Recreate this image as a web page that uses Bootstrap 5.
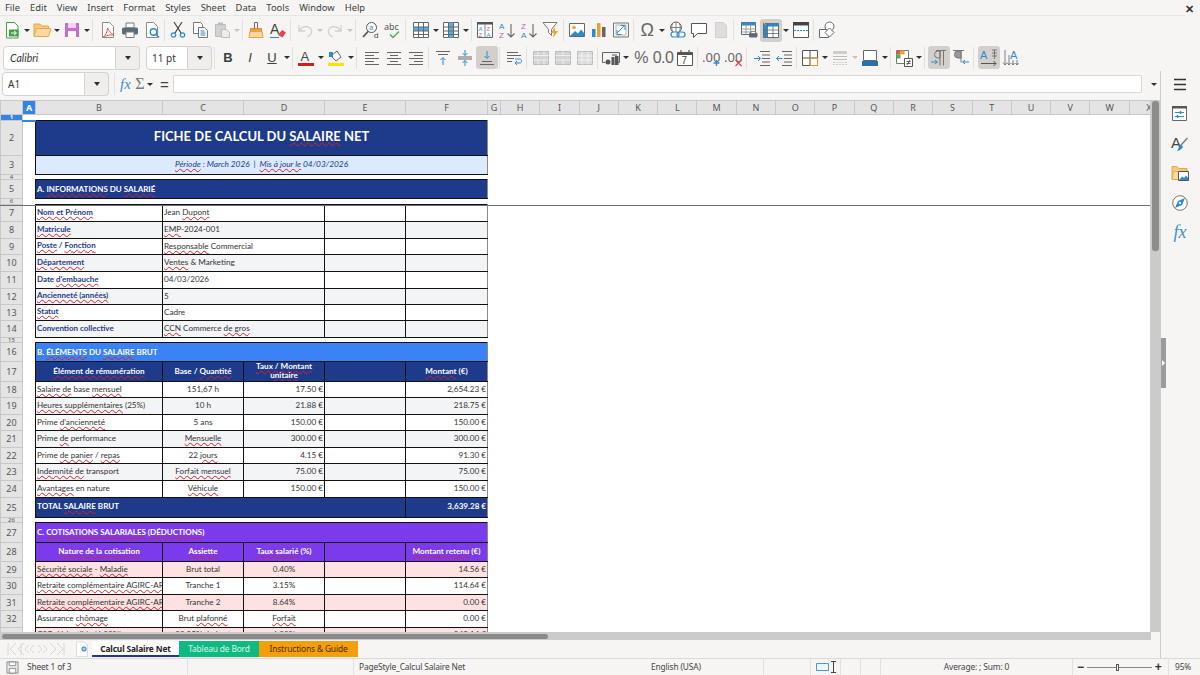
<!DOCTYPE html>
<html lang="en">
<head>
<meta charset="UTF-8" />
<title>Calcul Salaire Net</title>
<link rel="stylesheet" href="https://cdn.jsdelivr.net/npm/bootstrap@5.3.3/dist/css/bootstrap.min.css" />
<style>
  html, body { width: 1200px; height: 675px; overflow: hidden; }
  body { background: #f6f5f4; color: #3d3d3d; font: 9.4px/1 "Noto Sans", sans-serif; }
  .defs { width: 0; height: 0; position: absolute; }

  /* menu */
  .menu-row { height: 16px; border-bottom: 1px solid #e8e6e4; margin-right: 15px; flex-wrap: nowrap; padding-left: 5px; gap: 10px; }
  .menu-row .nav-link { padding: 0; color: #3d3d3d; font-size: 9.4px; line-height: 16px; }
  .close-x { position: absolute; left: 1185px; top: 3px; font-size: 11px; font-weight: 700; color: #333; }

  /* toolbars */
  .bar { height: 27px; padding-left: 1px; }
  .bar1 { height: 28px; }
  .tb { width: 22px; height: 23px; padding: 0; border: 0; border-radius: 3px; color: #3d3d3d; display: flex; align-items: center; justify-content: center; flex: none; }
  .tb.on { background: #d3d0cc; }
  .tb svg { width: 18px; height: 18px; display: block; }
  .tb-txt { font: 13px/1 "Liberation Sans", sans-serif; }
  .tb-lg { font: 16px/1 "Liberation Sans", sans-serif; color: #666; letter-spacing: -.5px; }
  .tb-omega { font-size: 18px; }
  .ar { width: 8px; height: 23px; flex: none; display: flex; align-items: center; justify-content: center; }
  .ar::after { content: ""; border: 3px solid transparent; border-top: 3.5px solid #2e2e2e; border-bottom: 0; }
  .ar.off::after { border-top-color: #c4c4c4; }
  .vsep { width: 1px; height: 22px; background: #e3e1de; flex: none; margin: 0 2px 0 1px; }
  .vsep.vw1 { margin-right: 3px; }
  .vsep.vw2 { margin-right: 4px; }
  .combo { flex: none; flex-wrap: nowrap; height: 24px; }
  .combo .form-control { font-size: 10px; line-height: 22px; height: 24px; padding: 0 5px; color: #333; background: #fff; border-color: #d5d1cd; border-radius: 4px 0 0 4px; font-family: "Noto Sans", sans-serif; min-width: 0; }
  .combo .btn { width: 24px; height: 24px; padding: 0; background: #f0eeec; border: 1px solid #d5d1cd; border-left: 0; border-radius: 0 4px 4px 0; display: flex; align-items: center; justify-content: center; margin-left: 0 !important; }
  .combo .btn::after { content: ""; border: 3.5px solid transparent; border-top: 4px solid #2e2e2e; border-bottom: 0; }
  .combo-font { width: 137px; margin: 0 6px 0 2px; }
  .combo-font .form-control { font-family: "Lato", sans-serif; font-style: italic; font-size: 10.5px; padding-left: 6px; }
  .combo-size { width: 66px; margin-right: 1px; }
  .combo-name { width: 107px; margin: 0 4px 0 2px; }
  .formula { height: 29px; padding-bottom: 3px; }
  .fx-txt { font: italic 15px/1 "Liberation Serif", serif; color: #3f8fd0; width: 17px; text-align: center; flex: none; }
  .sum-txt { font: 16px/1 "Liberation Serif", serif; color: #777; width: 12px; text-align: center; flex: none; }
  .eq-txt { font: 15px/1 "Liberation Sans", sans-serif; color: #444; width: 13px; text-align: center; margin-left: 4px; flex: none; }
  .finput { width: 969px; height: 18px; background: #fff; border: 1px solid #d9d6d3; border-radius: 2px; margin-left: 2px; flex: none; }

  /* spreadsheet */
  .work { height: 587px; }
  .left { width: 1161px; border-right: 1px solid #cfcbc7; }
  .viewport { width: 1151px; height: 532px; overflow: hidden; position: relative; background: #fff; }
  .sheet { table-layout: fixed; width: 1167px; border-collapse: collapse; font: 8.15px/1 "Lato", sans-serif; color: #333; }
  .sheet col.cr { width: 22px; } .sheet col.ca { width: 13px; } .sheet col.cb { width: 127px; }
  .sheet col.cc { width: 81px; } .sheet col.cf { width: 82px; } .sheet col.cg { width: 13px; }
  .sheet col.cn { width: 39.3px; }
  .sheet td, .sheet th { padding: 0 1px; overflow: hidden; white-space: nowrap; }
  .sheet .rh, .sheet .ch { background: #e4e4e4; color: #555; font: 400 9px/1 "Noto Sans", sans-serif; text-align: center; padding: 0 0 1px; border: 1px solid #c8c8c8; }
  .sheet .ch { height: 14px; padding: 0; }
  .sheet .sel { background: #3584e4; color: #fff; font-weight: 700; }
  .sheet .cursor { border: 0; border-left: 1px solid #3584e4; border-bottom: 2px solid #3584e4; padding: 0; }
  .sheet .r5 td, .sheet .r6 td { line-height: 3px; }
  .sheet .r5 .rh, .sheet .r6 .rh { font-size: 6px; line-height: 3px; padding: 0; }
  .r5 { height: 5px; } .r6 { height: 6px; } .r16 { height: 16px; } .r17 { height: 17px; }
  .r19 { height: 19px; } .r20 { height: 20px; } .r35 { height: 35px; }
  .sheet td.bx { border: 1px solid #111; padding-bottom: 1px; }
  .sheet td.bx:nth-last-child(2) { border-right-color: #8a8a8a; }
  .sheet .tail td.bx { vertical-align: top; padding-top: 2px; }
  .fill-navy { background: #1e3a8a; color: #fff; }
  .fill-blue { background: #3b82f6; color: #fff; }
  .fill-violet { background: #7c3aed; color: #fff; }
  .fill-sky { background: #dbeafe; color: #1e3a8a; }
  .fill-zeb { background: #f3f4f6; }
  .fill-rose { background: #fee2e2; }
  .sheet td.t-title { font-size: 13px; font-weight: 700; text-align: center; padding-bottom: 3px; }
  .sheet .t-sub { font-size: 8.3px; font-style: italic; text-align: center; }
  .sheet .t-sec { font-size: 8px; font-weight: 700; }
  .sheet .t-lab { color: #1e3a8a; font-weight: 700; font-size: 7.95px; }
  .sheet .t-head { font-size: 8.1px; font-weight: 700; text-align: center; line-height: 9px; white-space: normal; }
  .sheet td.t-tot { font-size: 8.1px; font-weight: 700; padding-bottom: 2px; }
  u.wv { text-decoration: underline wavy #d9202a; text-decoration-thickness: 1px; text-underline-offset: 1px; }
  .freeze { position: absolute; left: 0; right: 0; top: 105px; height: 1px; background: #6f6f6f; }
  .vscroll { width: 10px; background: #cbcbcb; padding: 1px 1px 0 2px; flex: none; }
  .vthumb { height: 150px; width: 7px; background: #8c8c8c; border-radius: 3px; }
  .hscroll { width: 1151px; height: 8px; background: #cbcbcb; padding: 2px 0 0 2px; }
  .hthumb { width: 546px; height: 5px; background: #8a8a8a; border-radius: 3px; }

  /* tabs */
  .tabs { height: 18px; padding-top: 1px; }
  .tab-nav { width: 75px; padding-left: 7px; }
  .tab-add { width: 17px; padding-left: 0; }
  .stab { height: 16px; line-height: 15px; font-size: 8.4px; letter-spacing: -.15px; text-align: center; flex: none; white-space: nowrap; }
  .stab-1 { width: 87px; background: #fff; color: #222; font-weight: 700; border-bottom: 2px solid #1e3a8a; }
  .stab-2 { width: 80px; background: #10b981; color: #d9f7ec; }
  .stab-3 { width: 99px; background: #f59e0b; color: #4a3000; }

  /* side */
  .side { width: 38px; padding-top: 2px; }
  .side .tb { margin: 0 auto 6.5px; }
  .side .fx-txt { font-size: 18px; color: #3f8fd0; }
  .grip { position: absolute; left: 1161px; top: 338px; width: 5px; height: 50px; background: #9b9b9b; }
  .grip::after { content: ""; position: absolute; left: 1px; top: 22px; border: 3px solid transparent; border-left: 3px solid #fff; border-right: 0; }

  /* status */
  .status { height: 17px; border-top: 1px solid #dcd9d6; font-size: 8.4px; letter-spacing: -.15px; color: #444; line-height: 16px; }
  .st { height: 16px; flex: none; border-left: 1px solid #e3e1de; white-space: nowrap; }
  .st-a { width: 187px; border-left: 0; padding-left: 6px; gap: 8px; }
  .st-b { width: 166px; }
  .st-c { width: 230px; padding-left: 5px; border-right: 0; }
  .st-d { width: 180px; padding-left: 68px; border-left: 0; }
  .st-e { width: 47px; }
  .st-f { width: 30px; padding-left: 5px; }
  .st-g { width: 20px; } .st-h { width: 20px; }
  .st-i { width: 192px; text-align: center; }
  .st-j { width: 96px; padding-left: 4px; gap: 3px; }
  .st-k { width: 32px; padding-left: 6px; }
  .zminus, .zplus { font: 700 12px/16px "Liberation Sans", sans-serif; color: #333; }
  .ztrack { width: 65px; height: 1px; background: #888; position: relative; }
  .zknob { position: absolute; left: 29px; top: -3px; width: 3px; height: 7px; border: 1px solid #555; background: #f6f5f4; }
</style>
</head>
<body class="position-relative">

<svg class="defs" xmlns="http://www.w3.org/2000/svg">
  <defs>
    <symbol id="i-new" viewBox="0 0 18 18"><path d="M3.5 1.5h8l3.5 3.5v12h-11.500z" fill="#fff" stroke="#43a047"/><path d="M6 8.500h9.500v7H6z" fill="#43a047"/><path d="M8 12h5M11 10l2.500 2L11 14" stroke="#fff" fill="none"/></symbol>
    <symbol id="i-open" viewBox="0 0 18 18"><path d="M1 15V3h6l2 2h6.500v3" fill="#f7c77f" stroke="#eaa845"/><path d="M1 15.500l2.500-8H18l-2.500 8z" fill="#fbd9a4" stroke="#eaa845"/></symbol>
    <symbol id="i-save" viewBox="0 0 18 18"><path d="M2 2h14v14H2z" fill="#c76bcc"/><path d="M5 2h8v5H5z" fill="#f1d3f2"/><path d="M5 10h8v6H5z" fill="#fff"/></symbol>
    <symbol id="i-pdf" viewBox="0 0 18 18"><path d="M3.500 1.500h7l4 4v11h-11z" fill="#fff" stroke="#8b8b8b"/><path d="M8.500 7c0 4-2 7-4.500 9.500 3-2 7-3 11-2.500-3-1.500-5-4-6.500-7z" fill="none" stroke="#e2574c"/></symbol>
    <symbol id="i-print" viewBox="0 0 18 18"><path d="M5 2h8v5H5z" fill="#fff" stroke="#7a7a7a"/><rect x="1" y="6.500" width="16" height="7" rx="1.500" fill="#5b6b7a"/><path d="M5 11h8v5.500H5z" fill="#fff" stroke="#7a7a7a"/></symbol>
    <symbol id="i-prev" viewBox="0 0 18 18"><path d="M3.500 1.500h7l4 4v11h-11z" fill="#fff" stroke="#8b8b8b"/><circle cx="10.500" cy="11" r="3.200" fill="#fff" stroke="#2c8ccb" stroke-width="1.400"/><path d="M13 13.500l3 3" stroke="#2c8ccb" stroke-width="1.500"/></symbol>
    <symbol id="i-cut" viewBox="0 0 18 18"><circle cx="4.500" cy="14" r="2.200" fill="none" stroke="#2c8ccb" stroke-width="1.200"/><circle cx="13.500" cy="14" r="2.200" fill="none" stroke="#2c8ccb" stroke-width="1.200"/><path d="M6 12L13 1M12 12L5 1" stroke="#444" stroke-width="1.200" fill="none"/></symbol>
    <symbol id="i-copy" viewBox="0 0 18 18"><path d="M2.500 1.500h7l2 2v9h-9z" fill="#fff" stroke="#777"/><path d="M7.500 6.500h6l3 3v7h-9z" fill="#fff" stroke="#777"/><path d="M9.500 10h4M9.500 12h5M9.500 14h5" stroke="#2c8ccb"/></symbol>
    <symbol id="i-paste" viewBox="0 0 18 18"><path d="M2.500 3.500h10v12h-10z" fill="#d2d2d2" stroke="#bdbdbd"/><path d="M5 1.500h5v3H5z" fill="#bdbdbd"/><path d="M8.500 8.500h5l3 3v5h-8z" fill="#ececec" stroke="#bdbdbd"/></symbol>
    <symbol id="i-clone" viewBox="0 0 18 18"><path d="M7.500 1.500h3v6h-3z" fill="#fff" stroke="#666"/><path d="M3.500 7.500h11v3h-11z" fill="#e9a13b" stroke="#d98e28"/><path d="M3 10.500h12l1 6H2z" fill="#fcd6a5" stroke="#e9a13b"/></symbol>
    <symbol id="i-clear" viewBox="0 0 18 18"><text x="1" y="13" font-family="Liberation Sans" font-size="14" fill="#444">A</text><path d="M9 14l4-5 4 2.500-3.500 5z" fill="#e2474b"/><path d="M1 16.500h9" stroke="#2c8ccb"/></symbol>
    <symbol id="i-undo" viewBox="0 0 18 18"><path d="M3 4v6h6M3.500 10C6 5 12 4 15 8c2 3 0 6.500-4 8" fill="none" stroke="#cfcfcf" stroke-width="1.300"/></symbol>
    <symbol id="i-redo" viewBox="0 0 18 18"><path d="M15 4v6H9M14.500 10C12 5 6 4 3 8c-2 3 0 6.500 4 8" fill="none" stroke="#cfcfcf" stroke-width="1.300"/></symbol>
    <symbol id="i-find" viewBox="0 0 18 18"><circle cx="9.500" cy="6.500" r="5" fill="#fff" stroke="#555"/><path d="M6 10.500L1 16" stroke="#555" stroke-width="1.800"/><text x="7.300" y="9" font-family="Liberation Sans" font-size="7" fill="#2c8ccb">a</text><text x="12" y="17" font-family="Liberation Sans" font-size="8" fill="#444">d</text></symbol>
    <symbol id="i-spell" viewBox="0 0 18 18"><text x="0" y="9" font-family="Noto Sans" font-size="9" fill="#555">abc</text><path d="M6 13.500l3 3 6-6" fill="none" stroke="#4caf50" stroke-width="1.500"/></symbol>
    <symbol id="i-rows" viewBox="0 0 18 18"><path d="M1.500 1.500h15v15h-15z" fill="#fff" stroke="#666"/><path d="M1.500 6h15v4h-15z" fill="#59ade6"/><path d="M1.500 6h15M1.500 10h15M1.500 13.500h15M6.500 1.500v15M11.500 1.500v15" stroke="#666" fill="none"/></symbol>
    <symbol id="i-cols" viewBox="0 0 18 18"><path d="M1.500 1.500h15v15h-15z" fill="#fff" stroke="#666"/><path d="M6.500 1.500h5v15h-5z" fill="#59ade6"/><path d="M1.500 6h15M1.500 10h15M1.500 13.500h15M6.500 1.500v15M11.500 1.500v15" stroke="#666" fill="none"/></symbol>
    <symbol id="i-sort" viewBox="0 0 18 18"><path d="M1.500 1.500h15v15h-15z" fill="#fff" stroke="#666"/><path d="M1 1h16v2.500H1z" fill="#555"/><path d="M9 3v13" stroke="#888"/><text x="2.500" y="9.500" font-family="Liberation Sans" font-size="6" fill="#2c8ccb">A</text><text x="10.500" y="9.500" font-family="Liberation Sans" font-size="6" fill="#c45fc9">Z</text><text x="2.500" y="15.500" font-family="Liberation Sans" font-size="6" fill="#c45fc9">Z</text><text x="10.500" y="15.500" font-family="Liberation Sans" font-size="6" fill="#2c8ccb">A</text></symbol>
    <symbol id="i-asc" viewBox="0 0 18 18"><text x="1" y="8" font-family="Liberation Sans" font-size="8" fill="#2c8ccb">A</text><text x="1" y="16.500" font-family="Liberation Sans" font-size="8" fill="#c45fc9">Z</text><path d="M13 3v13M9.500 12.500L13 16l3.500-3.500" fill="none" stroke="#666" stroke-width="1.100"/></symbol>
    <symbol id="i-desc" viewBox="0 0 18 18"><text x="1" y="8" font-family="Liberation Sans" font-size="8" fill="#c45fc9">Z</text><text x="1" y="16.500" font-family="Liberation Sans" font-size="8" fill="#2c8ccb">A</text><path d="M13 3v13M9.500 12.500L13 16l3.500-3.500" fill="none" stroke="#666" stroke-width="1.100"/></symbol>
    <symbol id="i-filter" viewBox="0 0 18 18"><path d="M1 1.500h14L9.500 8.500v6l-3-3v-3z" fill="#fff" stroke="#777"/><path d="M13 6l-4 6h3l-1 5 5-7h-3z" fill="#f0a02e"/></symbol>
    <symbol id="i-image" viewBox="0 0 18 18"><path d="M1.500 2.500h15v13h-15z" fill="#fff" stroke="#666"/><circle cx="6" cy="6.500" r="1.800" fill="#f0a02e"/><path d="M2 15l5-5 3 2.500 3-4 3.500 4v2.500z" fill="#2c8ccb"/></symbol>
    <symbol id="i-chart" viewBox="0 0 18 18"><path d="M2 8h3.500v8H2z" fill="#2c8ccb"/><path d="M7 2h3.500v14H7z" fill="#f0a02e"/><path d="M12 6h3.500v10H12z" fill="#666"/></symbol>
    <symbol id="i-pivot" viewBox="0 0 18 18"><path d="M1.500 2h15v14h-15z" fill="#f5f5f5" stroke="#777"/><path d="M4 4h10v10H4z" fill="#fff" stroke="#bbb"/><path d="M5 12l7-7M8.500 4.500H13V9M5 9v4.500h4.500" fill="none" stroke="#2c8ccb"/></symbol>
    <symbol id="i-link" viewBox="0 0 18 18"><circle cx="8" cy="6.500" r="5.500" fill="#fff" stroke="#666"/><path d="M2.500 6.500h11M8 1v11M4.800 2.500c-1.500 2.500-1.500 5.500 0 8M11.200 2.500c1.500 2.500 1.500 5.500 0 8" stroke="#666" fill="none" stroke-width=".8"/><rect x="3" y="11" width="8" height="5" rx="2.500" fill="#fff" stroke="#2c8ccb" stroke-width="1.200"/><rect x="9" y="11" width="8" height="5" rx="2.500" fill="none" stroke="#2c8ccb" stroke-width="1.200"/></symbol>
    <symbol id="i-note" viewBox="0 0 18 18"><path d="M1.500 2.500h15v10h-9l-4 4v-4h-2z" fill="#fff" stroke="#555"/></symbol>
    <symbol id="i-hdr" viewBox="0 0 18 18"><path d="M3.500 1.500h8l3 3v12h-11z" fill="#ddd" stroke="#cfcfcf"/></symbol>
    <symbol id="i-area" viewBox="0 0 18 18"><path d="M1.500 1.500h14v12h-14z" fill="#fff" stroke="#666"/><path d="M1.500 1.500h14v3h-14z" fill="#2c8ccb"/><path d="M1.500 8h14M1.500 11h14M6 1.500v12M10.500 1.500v12" stroke="#888" stroke-width=".8"/><rect x="9" y="11.500" width="8.500" height="5" rx="1.500" fill="#5b6b7a"/><path d="M11 10.500h4.500v2H11z" fill="#fff" stroke="#666" stroke-width=".7"/></symbol>
    <symbol id="i-frz" viewBox="0 0 18 18"><path d="M1.500 2.500h15v14h-15z" fill="#fff" stroke="#666"/><path d="M1.500 2.500h15v3h-15zM1.500 5.500h4v11h-4z" fill="#2c8ccb"/><path d="M1.500 9h15M1.500 12.500h15M5.500 2.500v14M11 2.500v14" stroke="#666" stroke-width=".8"/><path d="M1 1l3 3" stroke="#f0a02e"/></symbol>
    <symbol id="i-split" viewBox="0 0 18 18"><path d="M1.500 1.500h15v15h-15z" fill="#fff" stroke="#555"/><path d="M1 1h16v3.500H1z" fill="#444"/><path d="M2 9.500h14" stroke="#2c8ccb" stroke-dasharray="2 1"/></symbol>
    <symbol id="i-shapes" viewBox="0 0 18 18"><path d="M1.500 8.500h9v8h-9z" fill="#fff" stroke="#666"/><circle cx="11.500" cy="5.500" r="4.500" fill="#fff" stroke="#666"/><path d="M11.500 7l4.500 4.500-4.500 4.500L7 11.500z" fill="#fff" stroke="#666"/></symbol>
    <symbol id="i-left" viewBox="0 0 18 18"><path d="M2 3.500h14M2 6.500h9M2 9.500h14M2 12.500h9M2 15.500h14" stroke="#666"/></symbol>
    <symbol id="i-center" viewBox="0 0 18 18"><path d="M2 3.500h14M5 6.500h8M2 9.500h14M5 12.500h8M2 15.500h14" stroke="#666"/></symbol>
    <symbol id="i-right" viewBox="0 0 18 18"><path d="M2 3.500h14M7 6.500h9M2 9.500h14M7 12.500h9M2 15.500h14" stroke="#666"/></symbol>
    <symbol id="i-vtop" viewBox="0 0 18 18"><path d="M2 2.500h14M4 5.500h10" stroke="#666"/><path d="M9 16V9M6.500 11L9 8.500l2.500 2.500" fill="none" stroke="#2c8ccb"/></symbol>
    <symbol id="i-vmid" viewBox="0 0 18 18"><path d="M2 8h14M2 10h14" stroke="#666"/><path d="M9 1v5.500M6.500 4L9 6.500 11.500 4M9 17v-5.500M6.500 14L9 11.500l2.500 2.500" fill="none" stroke="#2c8ccb"/></symbol>
    <symbol id="i-vbot" viewBox="0 0 18 18"><path d="M9 2v7M6.500 7L9 9.500 11.500 7" fill="none" stroke="#2c8ccb"/><path d="M4 12.500h10M2 15.500h14" stroke="#666"/></symbol>
    <symbol id="i-wrap" viewBox="0 0 18 18"><path d="M2 3.500h11M2 6.500h14M2 9.500h7M2 12.500h5" stroke="#666"/><path d="M10 10h5c2 0 2 4 0 4h-5M12 12l-2 2 2 2" fill="none" stroke="#2c8ccb"/></symbol>
    <symbol id="i-mrg" viewBox="0 0 18 18"><path d="M1.500 2.500h15v13h-15z" fill="#d4d4d4" stroke="#bcbcbc"/><path d="M1.500 6.500h15M1.500 11h15M6 2.500v4M12 2.500v4M6 11v4.500M12 11v4.500" stroke="#eee"/></symbol>
    <symbol id="i-mrg2" viewBox="0 0 18 18"><path d="M1.500 2.500h15v13h-15z" fill="#d4d4d4" stroke="#bcbcbc"/><path d="M1.500 6.500h15M1.500 11h15M9 2.500v4M9 11v4.500" stroke="#eee"/></symbol>
    <symbol id="i-mrg3" viewBox="0 0 18 18"><path d="M1.500 2.500h15v13h-15z" fill="#dcdcdc" stroke="#bcbcbc"/><path d="M1.500 7h15M1.500 11h15M6 2.500v13M12 2.500v13" stroke="#f2f2f2"/></symbol>
    <symbol id="i-cur" viewBox="0 0 18 18"><path d="M.5 3.500h17v10h-3" fill="none" stroke="#666"/><path d="M.5 3.500v10h3" fill="none" stroke="#666"/><circle cx="6" cy="13" r="2.500" fill="#555"/><path d="M9.500 8h3v8h-3zM13 7h3.500v9H13z" fill="#555"/><path d="M10 6h5" stroke="#555"/></symbol>
    <symbol id="i-date" viewBox="0 0 18 18"><path d="M1.500 3.500h15v13h-15z" fill="#fff" stroke="#555"/><path d="M1.500 3.500h15v2.500h-15z" fill="#555"/><path d="M5 1v3M13 1v3" stroke="#555" stroke-width="1.200"/><text x="5.500" y="15" font-family="Liberation Sans" font-size="10" fill="#444">7</text></symbol>
    <symbol id="i-addd" viewBox="0 0 18 18"><text x="-1" y="13" font-family="Noto Sans" font-size="13" fill="#666">.00</text><path d="M13.500 11v6M10.500 14h6" stroke="#2c8ccb" stroke-width="1.300"/></symbol>
    <symbol id="i-deld" viewBox="0 0 18 18"><text x="-1" y="13" font-family="Noto Sans" font-size="13" fill="#666">.00</text><path d="M10.500 11l6 6M16.500 11l-6 6" stroke="#e2474b" stroke-width="1.300"/></symbol>
    <symbol id="i-ind" viewBox="0 0 18 18"><path d="M7 2.500h10M9 6h8M9 9.500h8M9 13h8M7 16.500h10" stroke="#666"/><path d="M1 9.500h6M5 7l2.500 2.500L5 12" fill="none" stroke="#2c8ccb"/></symbol>
    <symbol id="i-out" viewBox="0 0 18 18"><path d="M7 2.500h10M9 6h8M9 9.500h8M9 13h8M7 16.500h10" stroke="#666"/><path d="M7.500 9.500h-6M4 7L1.500 9.500 4 12" fill="none" stroke="#2c8ccb"/></symbol>
    <symbol id="i-bord" viewBox="0 0 18 18"><path d="M1.500 1.500h15v15h-15z" fill="#fff" stroke="#555"/><path d="M9 1.500v15M1.500 9h15" stroke="#555"/><path d="M9 9v7.500h7.500V9z" fill="none" stroke="#e9942c"/></symbol>
    <symbol id="i-bstyle" viewBox="0 0 18 18"><path d="M2 2h14v3H2z" fill="#ccc"/><path d="M2 7.500h14M2 10.500h14" stroke="#bbb"/><path d="M2 13.500h14M2 15.500h14" stroke="#ccc" stroke-dasharray="2 1"/></symbol>
    <symbol id="i-bcol" viewBox="0 0 18 18"><path d="M2.500 1.500h13v10h-13z" fill="#fff" stroke="#666"/><path d="M1 12h16v5H1z" fill="#2771b3"/></symbol>
    <symbol id="i-cond" viewBox="0 0 18 18"><path d="M1.500 1.500h12v13h-12z" fill="#fff" stroke="#777"/><path d="M1.500 1.500h4v4h-4z" fill="#e2574c"/><path d="M5.500 1.500h4v4h-4z" fill="#f0a02e"/><path d="M1.500 5.500h4v4h-4z" fill="#4caf50"/><path d="M9.500 9.500h8v8h-8z" fill="#fff" stroke="#555"/><path d="M11.500 12.500h4M11.500 14.500h4M15 11l-3 5" stroke="#333" stroke-width=".8"/></symbol>
    <symbol id="i-ltr" viewBox="0 0 18 18"><path d="M10 1.500v15M13.500 1.500v15M6 1.500h10" stroke="#777" fill="none"/><path d="M10 2H8a3.500 3.500 0 0 0 0 7h2z" fill="none" stroke="#777"/><path d="M1 13h6M5 11l2.500 2L5 15" stroke="#2c8ccb" fill="none"/></symbol>
    <symbol id="i-rtl" viewBox="0 0 18 18"><path d="M9 1.500v12M1 1.500h11" stroke="#777" fill="none"/><path d="M9 2H6a3.500 3.500 0 0 0 0 7h3z" fill="#999" stroke="#777"/><path d="M17 13h-6M13 11l-2.500 2 2.500 2" stroke="#2c8ccb" fill="none"/></symbol>
    <symbol id="i-thz" viewBox="0 0 18 18"><text x="0" y="10" font-family="Liberation Sans" font-size="11" fill="#2c8ccb">A</text><path d="M12 1h5M12 4h5M12 7h5M14.500 1v9" stroke="#666" stroke-width=".8"/><path d="M1 14.500h15M13.500 12l2.500 2.500-2.500 2.500" fill="none" stroke="#555"/></symbol>
    <symbol id="i-tvt" viewBox="0 0 18 18"><text x="8" y="10" font-family="Liberation Sans" font-size="11" fill="#2c8ccb">A</text><path d="M3 1v15M1 13.500L3 16l2-2.500M7 6v10M5.500 14L7 16l1.500-2M11 11v5M9.500 14l1.500 2 1.500-2M15 11v5M13.500 14l1.500 2 1.500-2" fill="none" stroke="#666" stroke-width=".8"/></symbol>
    <symbol id="i-burger" viewBox="0 0 18 18"><path d="M3 3.500h12M3 8.500h12M3 13.500h12" stroke="#333" stroke-width="1.700"/></symbol>
    <symbol id="i-prop" viewBox="0 0 18 18"><path d="M1.500 1.500h14v14h-14z" fill="#fff" stroke="#666"/><path d="M1 1h15v2.500H1z" fill="#555"/><path d="M4 7.500h9M4 11.500h9" stroke="#2c8ccb"/><path d="M9.500 6v3M6.500 10v3" stroke="#2c8ccb" stroke-width="1.500"/></symbol>
    <symbol id="i-style" viewBox="0 0 18 18"><text x="0" y="13" font-family="Liberation Sans" font-size="15" fill="#444">A</text><path d="M16.500 3L10 10" stroke="#777" stroke-width="1.300"/><path d="M10 9.500l2 2c-1 2.500-3 4-6 4.500 1.500-1.500 1.500-5 4-6.500z" fill="#2c8ccb"/></symbol>
    <symbol id="i-gall" viewBox="0 0 18 18"><path d="M1 15V2.500h5l2 2h8v3" fill="#f7c77f" stroke="#eaa845"/><path d="M1 15.500l1.500-8H8v8z" fill="#fbd9a4" stroke="#eaa845"/><path d="M7.500 7.500h10v9h-10z" fill="#fff" stroke="#555"/><path d="M8 16l3-3.500 2 1.500 2-2.500 2 2.500V16z" fill="#2c8ccb"/></symbol>
    <symbol id="i-navi" viewBox="0 0 18 18"><circle cx="9" cy="9" r="7.300" fill="#fff" stroke="#777"/><path d="M14 4l-3 7-7 3 3-7z" fill="#2c8ccb"/><circle cx="9" cy="9" r="1.200" fill="#fff"/></symbol>
    <symbol id="i-nav" viewBox="0 0 58 16"><g fill="none" stroke="#d6d6d6"><path d="M1 2v12M9 2L3 8l6 6M17 2l-6 6 6 6M14 2v12"/><path d="M22 4l-4 4 4 4M27 4l-4 4 4 4M31 4l4 4-4 4M36 4l4 4-4 4"/><path d="M43 2l6 6-6 6M50 2l6 6-6 6M57 2v12"/></g></symbol>
    <symbol id="i-add" viewBox="0 0 14 16"><path d="M1.500 1h8l3 3v11.500h-11z" fill="#fff" stroke="#ddd"/><circle cx="9" cy="8" r="2.500" fill="#2c8ccb"/><path d="M7.500 8h3M9 6.500v3" stroke="#fff" stroke-width=".8"/></symbol>
    <symbol id="i-doc" viewBox="0 0 14 14"><path d="M1 1h12v12H1z" fill="#eee" stroke="#888"/><path d="M3.500 1h7v4h-7zM3.500 8h7v5h-7z" fill="#fff" stroke="#888"/></symbol>
    <symbol id="i-mode" viewBox="0 0 24 12"><path d="M.5 2.500h12v7H.5z" fill="#eef5fb" stroke="#4f97d3"/><path d="M15 .5h5M15 11.500h5M17.500 .5v11" stroke="#444"/></symbol>
  </defs>
</svg>

<div class="d-flex flex-column vh-100">
  <nav class="nav menu-row">
    <a class="nav-link" href="#">File</a><a class="nav-link" href="#">Edit</a><a class="nav-link" href="#">View</a><a class="nav-link" href="#">Insert</a><a class="nav-link" href="#">Format</a><a class="nav-link" href="#">Styles</a><a class="nav-link" href="#">Sheet</a><a class="nav-link" href="#">Data</a><a class="nav-link" href="#">Tools</a><a class="nav-link" href="#">Window</a><a class="nav-link" href="#">Help</a>
  </nav>
  <span class="close-x">&#10005;</span>

  <!-- standard toolbar -->
  <div class="bar bar1 d-flex align-items-center">
    <button class="btn tb"><svg><use href="#i-new"/></svg></button><span class="ar"></span>
    <button class="btn tb"><svg><use href="#i-open"/></svg></button><span class="ar"></span>
    <button class="btn tb"><svg><use href="#i-save"/></svg></button><span class="ar"></span><span class="vsep vw2"></span>
    <button class="btn tb"><svg><use href="#i-pdf"/></svg></button>
    <button class="btn tb"><svg><use href="#i-print"/></svg></button>
    <button class="btn tb"><svg><use href="#i-prev"/></svg></button><span class="vsep"></span>
    <button class="btn tb"><svg><use href="#i-cut"/></svg></button>
    <button class="btn tb"><svg><use href="#i-copy"/></svg></button>
    <button class="btn tb"><svg><use href="#i-paste"/></svg></button><span class="ar off"></span><span class="vsep"></span>
    <button class="btn tb"><svg><use href="#i-clone"/></svg></button>
    <button class="btn tb"><svg><use href="#i-clear"/></svg></button><span class="vsep vw1"></span>
    <button class="btn tb"><svg><use href="#i-undo"/></svg></button><span class="ar off"></span>
    <button class="btn tb"><svg><use href="#i-redo"/></svg></button><span class="ar off"></span><span class="vsep vw2"></span>
    <button class="btn tb"><svg><use href="#i-find"/></svg></button>
    <button class="btn tb"><svg><use href="#i-spell"/></svg></button><span class="vsep vw2"></span>
    <button class="btn tb"><svg><use href="#i-rows"/></svg></button><span class="ar"></span>
    <button class="btn tb"><svg><use href="#i-cols"/></svg></button><span class="ar"></span><span class="vsep"></span>
    <button class="btn tb"><svg><use href="#i-sort"/></svg></button>
    <button class="btn tb"><svg><use href="#i-asc"/></svg></button>
    <button class="btn tb"><svg><use href="#i-desc"/></svg></button>
    <button class="btn tb"><svg><use href="#i-filter"/></svg></button><span class="vsep"></span>
    <button class="btn tb"><svg><use href="#i-image"/></svg></button>
    <button class="btn tb"><svg><use href="#i-chart"/></svg></button>
    <button class="btn tb"><svg><use href="#i-pivot"/></svg></button><span class="vsep"></span>
    <button class="btn tb tb-lg tb-omega">&#937;</button><span class="ar"></span>
    <button class="btn tb"><svg><use href="#i-link"/></svg></button>
    <button class="btn tb"><svg><use href="#i-note"/></svg></button>
    <button class="btn tb"><svg><use href="#i-hdr"/></svg></button><span class="vsep vw2"></span>
    <button class="btn tb"><svg><use href="#i-area"/></svg></button>
    <button class="btn tb on"><svg><use href="#i-frz"/></svg></button><span class="ar"></span>
    <button class="btn tb"><svg><use href="#i-split"/></svg></button><span class="vsep"></span>
    <button class="btn tb"><svg><use href="#i-shapes"/></svg></button>
  </div>

  <!-- formatting toolbar -->
  <div class="bar d-flex align-items-center">
    <div class="input-group combo combo-font"><div class="form-control">Calibri</div><button class="btn"></button></div>
    <div class="input-group combo combo-size"><div class="form-control">11 pt</div><button class="btn"></button></div>
    <span class="vsep"></span>
    <button class="btn tb tb-txt fw-bold">B</button>
    <button class="btn tb tb-txt fst-italic">I</button>
    <button class="btn tb tb-txt text-decoration-underline">U</button><span class="ar"></span><span class="vsep"></span>
    <button class="btn tb"><svg viewBox="0 0 18 18"><text x="3.500" y="12" font-family="Liberation Sans" font-size="13" fill="#444">A</text><path d="M1 14h16v3H1z" fill="#c9211e"/></svg></button><span class="ar"></span>
    <button class="btn tb"><svg viewBox="0 0 18 18"><path d="M4 7l6-5 4 6-5 4z" fill="#fff" stroke="#666"/><path d="M2 3h4v5H2z" fill="#2c8ccb"/><path d="M1 14h16v3H1z" fill="#ffe100"/></svg></button><span class="ar"></span><span class="vsep vw2"></span>
    <button class="btn tb"><svg><use href="#i-left"/></svg></button>
    <button class="btn tb"><svg><use href="#i-center"/></svg></button>
    <button class="btn tb"><svg><use href="#i-right"/></svg></button><span class="vsep vw1"></span>
    <button class="btn tb"><svg><use href="#i-vtop"/></svg></button>
    <button class="btn tb"><svg><use href="#i-vmid"/></svg></button>
    <button class="btn tb on"><svg><use href="#i-vbot"/></svg></button><span class="vsep vw1"></span>
    <button class="btn tb"><svg><use href="#i-wrap"/></svg></button><span class="vsep vw1"></span>
    <button class="btn tb"><svg><use href="#i-mrg"/></svg></button>
    <button class="btn tb"><svg><use href="#i-mrg2"/></svg></button>
    <button class="btn tb"><svg><use href="#i-mrg3"/></svg></button><span class="vsep"></span>
    <button class="btn tb"><svg><use href="#i-cur"/></svg></button><span class="ar"></span>
    <button class="btn tb tb-lg">%</button>
    <button class="btn tb tb-lg">0.0</button>
    <button class="btn tb"><svg><use href="#i-date"/></svg></button><span class="vsep vw1"></span>
    <button class="btn tb"><svg><use href="#i-addd"/></svg></button>
    <button class="btn tb"><svg><use href="#i-deld"/></svg></button><span class="vsep vw2"></span>
    <button class="btn tb"><svg><use href="#i-ind"/></svg></button>
    <button class="btn tb"><svg><use href="#i-out"/></svg></button><span class="vsep"></span>
    <button class="btn tb"><svg><use href="#i-bord"/></svg></button><span class="ar"></span>
    <button class="btn tb"><svg><use href="#i-bstyle"/></svg></button><span class="ar off"></span>
    <button class="btn tb"><svg><use href="#i-bcol"/></svg></button><span class="ar"></span><span class="vsep"></span>
    <button class="btn tb"><svg><use href="#i-cond"/></svg></button><span class="ar"></span><span class="vsep vw1"></span>
    <button class="btn tb on"><svg><use href="#i-ltr"/></svg></button>
    <button class="btn tb"><svg><use href="#i-rtl"/></svg></button><span class="vsep vw2"></span>
    <button class="btn tb on"><svg><use href="#i-thz"/></svg></button>
    <button class="btn tb"><svg><use href="#i-tvt"/></svg></button>
  </div>

  <div class="work d-flex">
    <div class="left d-flex flex-column">
      <!-- formula bar -->
      <div class="formula d-flex align-items-center">
        <div class="input-group combo combo-name"><div class="form-control">A1</div><button class="btn"></button></div>
        <span class="vsep"></span>
        <span class="fx-txt">fx</span><span class="sum-txt">&#931;</span><span class="ar"></span><span class="eq-txt">=</span>
        <div class="finput"></div><span class="ar ms-2"></span>
      </div>

      <div class="d-flex">
        <div class="viewport">
          <table class="sheet">
            <colgroup><col class="cr"><col class="ca"><col class="cb"><col class="cc"><col class="cc"><col class="cc"><col class="cf"><col class="cg"><col class="cn"><col class="cn"><col class="cn"><col class="cn"><col class="cn"><col class="cn"><col class="cn"><col class="cn"><col class="cn"><col class="cn"><col class="cn"><col class="cn"><col class="cn"><col class="cn"><col class="cn"><col class="cn"><col class="cn"></colgroup>
            <tr><th class="ch"></th><th class="ch sel">A</th><th class="ch">B</th><th class="ch">C</th><th class="ch">D</th><th class="ch">E</th><th class="ch">F</th><th class="ch">G</th><th class="ch">H</th><th class="ch">I</th><th class="ch">J</th><th class="ch">K</th><th class="ch">L</th><th class="ch">M</th><th class="ch">N</th><th class="ch">O</th><th class="ch">P</th><th class="ch">Q</th><th class="ch">R</th><th class="ch">S</th><th class="ch">T</th><th class="ch">U</th><th class="ch">V</th><th class="ch">W</th><th class="ch">X</th></tr>
            <tr class="r6"><th class="rh sel">1</th><td class="cursor"></td><td colspan="23"></td></tr>
            <tr class="r35"><th class="rh">2</th><td></td><td colspan="5" class="bx fill-navy t-title">FICHE DE CALCUL DU <u class="wv">SALAIRE</u> NET</td><td colspan="18"></td></tr>
            <tr class="r19"><th class="rh">3</th><td></td><td colspan="5" class="bx fill-sky t-sub"><u class="wv">Période</u> : March 2026 &nbsp;|&nbsp; <u class="wv">Mis à jour le</u> 04/03/2026</td><td colspan="18"></td></tr>
            <tr class="r5"><th class="rh">4</th><td></td><td colspan="23"></td></tr>
            <tr class="r19"><th class="rh">5</th><td></td><td colspan="5" class="bx fill-navy t-sec">A. <u class="wv">INFORMATIONS</u> DU <u class="wv">SALARIÉ</u></td><td colspan="18"></td></tr>
            <tr class="r6"><th class="rh">6</th><td></td><td colspan="23"></td></tr>
            <tr class="r17"><th class="rh">7</th><td></td><td class="bx t-lab"><u class="wv">Nom et Prénom</u></td><td class="bx" colspan="2">Jean <u class="wv">Dupont</u></td><td class="bx"></td><td class="bx"></td><td colspan="18"></td></tr>
            <tr class="r17"><th class="rh">8</th><td></td><td class="bx t-lab fill-zeb"><u class="wv">Matricule</u></td><td class="bx fill-zeb" colspan="2"><u class="wv">EMP</u>-2024-001</td><td class="bx fill-zeb"></td><td class="bx fill-zeb"></td><td colspan="18"></td></tr>
            <tr class="r16"><th class="rh">9</th><td></td><td class="bx t-lab"><u class="wv">Poste</u> / <u class="wv">Fonction</u></td><td class="bx" colspan="2"><u class="wv">Responsable</u> Commercial</td><td class="bx"></td><td class="bx"></td><td colspan="18"></td></tr>
            <tr class="r17"><th class="rh">10</th><td></td><td class="bx t-lab fill-zeb"><u class="wv">Département</u></td><td class="bx fill-zeb" colspan="2"><u class="wv">Ventes</u> &amp; Marketing</td><td class="bx fill-zeb"></td><td class="bx fill-zeb"></td><td colspan="18"></td></tr>
            <tr class="r17"><th class="rh">11</th><td></td><td class="bx t-lab">Date <u class="wv">d'embauche</u></td><td class="bx" colspan="2">04/03/2026</td><td class="bx"></td><td class="bx"></td><td colspan="18"></td></tr>
            <tr class="r16"><th class="rh">12</th><td></td><td class="bx t-lab fill-zeb"><u class="wv">Ancienneté (années)</u></td><td class="bx fill-zeb" colspan="2">5</td><td class="bx fill-zeb"></td><td class="bx fill-zeb"></td><td colspan="18"></td></tr>
            <tr class="r16"><th class="rh">13</th><td></td><td class="bx t-lab"><u class="wv">Statut</u></td><td class="bx" colspan="2">Cadre</td><td class="bx"></td><td class="bx"></td><td colspan="18"></td></tr>
            <tr class="r17"><th class="rh">14</th><td></td><td class="bx t-lab fill-zeb">Convention collective</td><td class="bx fill-zeb" colspan="2"><u class="wv">CCN</u> Commerce <u class="wv">de gros</u></td><td class="bx fill-zeb"></td><td class="bx fill-zeb"></td><td colspan="18"></td></tr>
            <tr class="r5"><th class="rh">15</th><td></td><td colspan="23"></td></tr>
            <tr class="r19"><th class="rh">16</th><td></td><td colspan="5" class="bx fill-blue t-sec">B. <u class="wv">ÉLÉMENTS</u> DU <u class="wv">SALAIRE</u> BRUT</td><td colspan="18"></td></tr>
            <tr class="r19"><th class="rh">17</th><td></td><td class="bx fill-navy t-head"><u class="wv">Élément de rémunération</u></td><td class="bx fill-navy t-head">Base / <u class="wv">Quantité</u></td><td class="bx fill-navy t-head"><u class="wv">Taux / Montant unitaire</u></td><td class="bx fill-navy t-head"></td><td class="bx fill-navy t-head"><u class="wv">Montant</u> (€)</td><td colspan="18"></td></tr>
            <tr class="r16"><th class="rh">18</th><td></td><td class="bx"><u class="wv">Salaire de</u> base <u class="wv">mensuel</u></td><td class="bx text-center">151,67 h</td><td class="bx text-end">17.50 €</td><td class="bx"></td><td class="bx text-end">2,654.23 €</td><td colspan="18"></td></tr>
            <tr class="r17"><th class="rh">19</th><td></td><td class="bx fill-zeb"><u class="wv">Heures supplémentaires</u> (25%)</td><td class="bx fill-zeb text-center">10 h</td><td class="bx fill-zeb text-end">21.88 €</td><td class="bx fill-zeb"></td><td class="bx fill-zeb text-end">218.75 €</td><td colspan="18"></td></tr>
            <tr class="r16"><th class="rh">20</th><td></td><td class="bx">Prime <u class="wv">d'ancienneté</u></td><td class="bx text-center">5 ans</td><td class="bx text-end">150.00 €</td><td class="bx"></td><td class="bx text-end">150.00 €</td><td colspan="18"></td></tr>
            <tr class="r17"><th class="rh">21</th><td></td><td class="bx fill-zeb">Prime <u class="wv">de</u> performance</td><td class="bx fill-zeb text-center"><u class="wv">Mensuelle</u></td><td class="bx fill-zeb text-end">300.00 €</td><td class="bx fill-zeb"></td><td class="bx fill-zeb text-end">300.00 €</td><td colspan="18"></td></tr>
            <tr class="r16"><th class="rh">22</th><td></td><td class="bx">Prime <u class="wv">de panier</u> / <u class="wv">repas</u></td><td class="bx text-center">22 <u class="wv">jours</u></td><td class="bx text-end">4.15 €</td><td class="bx"></td><td class="bx text-end">91.30 €</td><td colspan="18"></td></tr>
            <tr class="r17"><th class="rh">23</th><td></td><td class="bx fill-zeb"><u class="wv">Indemnité de</u> transport</td><td class="bx fill-zeb text-center"><u class="wv">Forfait mensuel</u></td><td class="bx fill-zeb text-end">75.00 €</td><td class="bx fill-zeb"></td><td class="bx fill-zeb text-end">75.00 €</td><td colspan="18"></td></tr>
            <tr class="r17"><th class="rh">24</th><td></td><td class="bx"><u class="wv">Avantages</u> en nature</td><td class="bx text-center"><u class="wv">Véhicule</u></td><td class="bx text-end">150.00 €</td><td class="bx"></td><td class="bx text-end">150.00 €</td><td colspan="18"></td></tr>
            <tr class="r20"><th class="rh">25</th><td></td><td colspan="4" class="bx fill-navy t-tot">TOTAL <u class="wv">SALAIRE</u> BRUT</td><td class="bx fill-navy t-tot text-end">3,639.28 €</td><td colspan="18"></td></tr>
            <tr class="r5"><th class="rh">26</th><td></td><td colspan="23"></td></tr>
            <tr class="r20"><th class="rh">27</th><td></td><td colspan="5" class="bx fill-violet t-sec">C. <u class="wv">COTISATIONS SALARIALES</u> (<u class="wv">DÉDUCTIONS</u>)</td><td colspan="18"></td></tr>
            <tr class="r19"><th class="rh">28</th><td></td><td class="bx fill-violet t-head"><u class="wv">Nature de la cotisation</u></td><td class="bx fill-violet t-head"><u class="wv">Assiette</u></td><td class="bx fill-violet t-head"><u class="wv">Taux salarié</u> (%)</td><td class="bx fill-violet t-head"></td><td class="bx fill-violet t-head"><u class="wv">Montant retenu</u> (€)</td><td colspan="18"></td></tr>
            <tr class="r16"><th class="rh">29</th><td></td><td class="bx fill-rose"><u class="wv">Sécurité sociale</u> - <u class="wv">Maladie</u></td><td class="bx fill-rose text-center">Brut total</td><td class="bx fill-rose text-center">0.40%</td><td class="bx fill-rose"></td><td class="bx fill-rose text-end">14.56 €</td><td colspan="18"></td></tr>
            <tr class="r17"><th class="rh">30</th><td></td><td class="bx"><u class="wv">Retraite complémentaire AGIRC-ARRCO</u></td><td class="bx text-center">Tranche 1</td><td class="bx text-center">3.15%</td><td class="bx"></td><td class="bx text-end">114.64 €</td><td colspan="18"></td></tr>
            <tr class="r16"><th class="rh">31</th><td></td><td class="bx fill-rose"><u class="wv">Retraite complémentaire AGIRC-ARRCO</u></td><td class="bx fill-rose text-center">Tranche 2</td><td class="bx fill-rose text-center">8.64%</td><td class="bx fill-rose"></td><td class="bx fill-rose text-end">0.00 €</td><td colspan="18"></td></tr>
            <tr class="r17"><th class="rh">32</th><td></td><td class="bx">Assurance <u class="wv">chômage</u></td><td class="bx text-center">Brut <u class="wv">plafonné</u></td><td class="bx text-center"><u class="wv">Forfait</u></td><td class="bx"></td><td class="bx text-end">0.00 €</td><td colspan="18"></td></tr>
            <tr class="r17 tail"><th class="rh"></th><td></td><td class="bx fill-rose">CSG déductible (6.80%)</td><td class="bx fill-rose text-center">98.25% du brut</td><td class="bx fill-rose text-center">6.80%</td><td class="bx fill-rose"></td><td class="bx fill-rose text-end">243.14 €</td><td colspan="18"></td></tr>
          </table>
          <div class="freeze"></div>
        </div>
        <div class="vscroll"><div class="vthumb"></div></div>
      </div>
      <div class="hscroll"><div class="hthumb"></div></div>

      <!-- sheet tabs -->
      <div class="tabs d-flex align-items-start">
        <div class="tab-nav"><svg width="58" height="16"><use href="#i-nav"/></svg></div>
        <div class="tab-add"><svg width="14" height="16"><use href="#i-add"/></svg></div>
        <div class="stab stab-1">Calcul Salaire Net</div>
        <div class="stab stab-2">Tableau de Bord</div>
        <div class="stab stab-3">Instructions &amp; Guide</div>
      </div>
    </div>

    <!-- sidebar -->
    <div class="side d-flex flex-column">
      <button class="btn tb"><svg><use href="#i-burger"/></svg></button>
      <button class="btn tb"><svg><use href="#i-prop"/></svg></button>
      <button class="btn tb"><svg><use href="#i-style"/></svg></button>
      <button class="btn tb"><svg><use href="#i-gall"/></svg></button>
      <button class="btn tb"><svg><use href="#i-navi"/></svg></button>
      <button class="btn tb fx-txt">fx</button>
    </div>
  </div>
  <div class="grip"></div>

  <!-- status bar -->
  <div class="status d-flex">
    <div class="st st-a d-flex align-items-center"><svg width="13" height="13"><use href="#i-doc"/></svg><span>Sheet 1 of 3</span></div>
    <div class="st st-b"></div>
    <div class="st st-c">PageStyle_Calcul Salaire Net</div>
    <div class="st st-d">English (USA)</div>
    <div class="st st-e"></div>
    <div class="st st-f d-flex align-items-center"><svg width="24" height="12"><use href="#i-mode"/></svg></div>
    <div class="st st-g"></div><div class="st st-h"></div>
    <div class="st st-i">Average: ; Sum: 0</div>
    <div class="st st-j d-flex align-items-center"><span class="zminus">&#8722;</span><div class="ztrack"><div class="zknob"></div></div><span class="zplus">+</span></div>
    <div class="st st-k">95%</div>
  </div>
</div>
<script src="https://cdn.jsdelivr.net/npm/bootstrap@5.3.3/dist/js/bootstrap.bundle.min.js"></script>
</body>
</html>
